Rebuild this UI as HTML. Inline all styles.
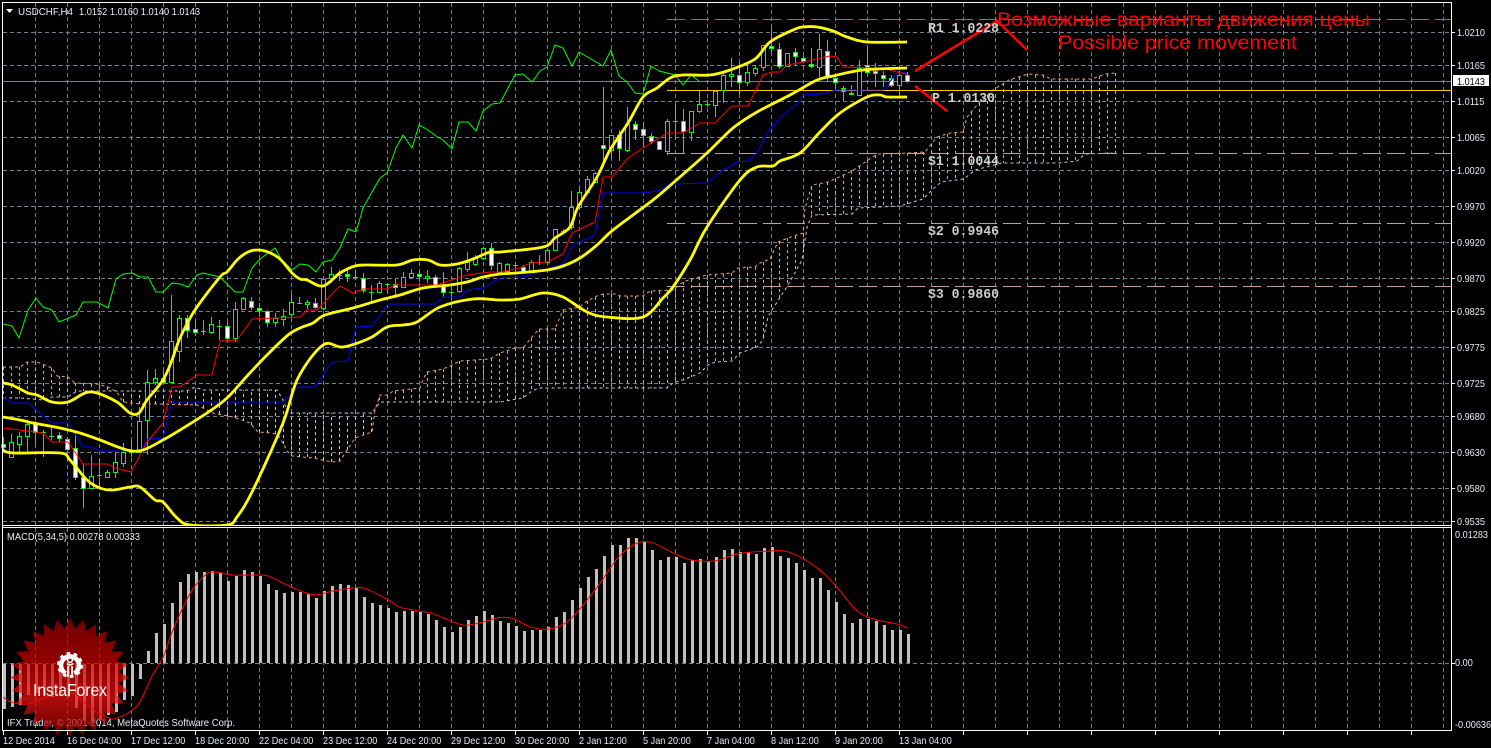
<!DOCTYPE html>
<html><head><meta charset="utf-8"><title>USDCHF,H4</title>
<style>
html,body{margin:0;padding:0;background:#000;width:1491px;height:748px;overflow:hidden}
svg{display:block;position:absolute;left:0;top:0}
.ax{font-family:"Liberation Sans",sans-serif;font-size:10.5px;fill:#e6eef6}
.lv{font-family:"Liberation Mono",monospace;font-size:13.5px;font-weight:bold;fill:#cfcfcf}
.rt{font-family:"Liberation Sans",sans-serif;font-size:19px;fill:#f00}
</style></head><body>
<svg id="c" width="1491" height="748" viewBox="0 0 1491 748" xmlns="http://www.w3.org/2000/svg">
<defs><clipPath id="mc"><rect x="3" y="3" width="1448" height="522"/></clipPath></defs>
<rect width="1491" height="748" fill="#000"/>
<g id="grid"></g>
<g id="cloud"></g>
<g id="hl" shape-rendering="crispEdges">
<line x1="3" x2="1451" y1="81.5" y2="81.5" stroke="#708090"/>
<line x1="667" x2="1451" y1="19.5" y2="19.5" stroke="#e0521c" stroke-dasharray="18 6"/>
<line x1="667" x2="1451" y1="153.5" y2="153.5" stroke="#c8a08c" stroke-dasharray="18 6"/>
<line x1="667" x2="1451" y1="223.5" y2="223.5" stroke="#c8a08c" stroke-dasharray="18 6"/>
<line x1="667" x2="1451" y1="286.5" y2="286.5" stroke="#c8a08c" stroke-dasharray="18 6"/>
<line x1="667" x2="1451" y1="90.5" y2="90.5" stroke="#ffc800"/>
</g>
<g id="candles" shape-rendering="crispEdges"></g>
<g id="lines" fill="none" clip-path="url(#mc)"></g>
<g id="macd"></g>
<text class="ax" x="7" y="726" textLength="228" lengthAdjust="spacingAndGlyphs">IFX Trader, © 2001-2014, MetaQuotes Software Corp.</text>
<g id="logo"></g>
<g id="frame" shape-rendering="crispEdges" fill="#fff">
<rect x="2" y="2" width="1450" height="1"/>
<rect x="2" y="2" width="1" height="729"/>
<rect x="1451" y="2" width="1" height="729"/>
<rect x="2" y="525" width="1450" height="1"/>
<rect x="2" y="527" width="1450" height="1"/>
<rect x="2" y="730" width="1450" height="1"/>
</g>
<polyline points="915,71 997,21 1027,50" fill="none" stroke="#f00" stroke-width="2.5"/>
<line x1="915" y1="86" x2="947" y2="111" stroke="#f00" stroke-width="2.5"/>
<polygon points="6,9 13,9 9.5,13" fill="#fff"/>
<text class="ax" x="18" y="15" textLength="55" lengthAdjust="spacingAndGlyphs">USDCHF,H4</text>
<text class="ax" x="79" y="15" textLength="121" lengthAdjust="spacingAndGlyphs">1.0152 1.0160 1.0140 1.0143</text>
<text class="ax" x="7" y="540" textLength="133" lengthAdjust="spacingAndGlyphs">MACD(5,34,5) 0.00278 0.00333</text>
<text class="lv" x="928" y="32" textLength="71" lengthAdjust="spacingAndGlyphs">R1 1.0228</text>
<text class="lv" x="932" y="102" textLength="63" lengthAdjust="spacingAndGlyphs">P 1.0130</text>
<text class="lv" x="928" y="165" textLength="71" lengthAdjust="spacingAndGlyphs">S1 1.0044</text>
<text class="lv" x="928" y="235" textLength="71" lengthAdjust="spacingAndGlyphs">S2 0.9946</text>
<text class="lv" x="928" y="298" textLength="71" lengthAdjust="spacingAndGlyphs">S3 0.9860</text>
<text class="rt" x="997" y="26" textLength="373" lengthAdjust="spacingAndGlyphs">Возможные варианты движения цены</text>
<text class="rt" x="1058" y="49" textLength="239" lengthAdjust="spacingAndGlyphs">Possible price movement</text>
<text class="ax fit" x="1457" y="36">1.0210</text>
<text class="ax fit" x="1457" y="69">1.0165</text>
<text class="ax fit" x="1457" y="105">1.0115</text>
<text class="ax fit" x="1457" y="141">1.0065</text>
<text class="ax fit" x="1457" y="174">1.0020</text>
<text class="ax fit" x="1457" y="210">0.9970</text>
<text class="ax fit" x="1457" y="246">0.9920</text>
<text class="ax fit" x="1457" y="282">0.9870</text>
<text class="ax fit" x="1457" y="315">0.9825</text>
<text class="ax fit" x="1457" y="351">0.9775</text>
<text class="ax fit" x="1457" y="387">0.9725</text>
<text class="ax fit" x="1457" y="420">0.9680</text>
<text class="ax fit" x="1457" y="456">0.9630</text>
<text class="ax fit" x="1457" y="492">0.9580</text>
<text class="ax fit" x="1457" y="525">0.9535</text>
<rect x="1453" y="75" width="36" height="11" fill="#fff"/>
<text class="ax fit" x="1457" y="85" style="fill:#000">1.0143</text>
<text class="ax fit" x="1455" y="538">0.01283</text>
<text class="ax fit" x="1455" y="666">0.00</text>
<text class="ax fit" x="1455" y="728">-0.00636</text>
<text class="ax fit" x="3" y="744">12 Dec 2014</text>
<text class="ax fit" x="67" y="744">16 Dec 04:00</text>
<text class="ax fit" x="131" y="744">17 Dec 12:00</text>
<text class="ax fit" x="195" y="744">18 Dec 20:00</text>
<text class="ax fit" x="259" y="744">22 Dec 04:00</text>
<text class="ax fit" x="323" y="744">23 Dec 12:00</text>
<text class="ax fit" x="387" y="744">24 Dec 20:00</text>
<text class="ax fit" x="451" y="744">29 Dec 12:00</text>
<text class="ax fit" x="515" y="744">30 Dec 20:00</text>
<text class="ax fit" x="579" y="744">2 Jan 12:00</text>
<text class="ax fit" x="643" y="744">5 Jan 20:00</text>
<text class="ax fit" x="707" y="744">7 Jan 04:00</text>
<text class="ax fit" x="771" y="744">8 Jan 12:00</text>
<text class="ax fit" x="835" y="744">9 Jan 20:00</text>
<text class="ax fit" x="899" y="744">13 Jan 04:00</text>
<text x="33" y="696" textLength="74" lengthAdjust="spacingAndGlyphs" font-family="Liberation Sans, sans-serif" font-size="17.5" fill="#fff">InstaForex</text>
<g transform="translate(70 665)" fill="none" stroke="#fff">
<circle r="11.5" stroke-width="3" stroke-dasharray="3.6 3.6"/>
<path d="M-4.2 8.4A9 9 0 1 1 4.2 8.4" stroke-width="4.6"/>
<circle cy="-5" r="2.4" stroke-width="1.6"/>
<path d="M-3.2 -1.5Q0 1.2 3.2 -1.5" stroke-width="1.6"/>
<path d="M-2 1V12M2 1V12" stroke-width="1.8"/>
</g>
</svg>
<script>
var $=function(id){return document.getElementById(id)};
var s,i,j;
/* grid */
s='<g shape-rendering="crispEdges" stroke="#708090" stroke-dasharray="4 3">';
[32,65,101,137,170,206,242,278,311,347,383,416,452,488,521,663].forEach(function(y){s+='<line x1="3" x2="1451" y1="'+(y+.5)+'" y2="'+(y+.5)+'"/>'});
for(i=35;i<=1443;i+=32){s+='<line x1="'+(i+.5)+'" x2="'+(i+.5)+'" y1="3" y2="525"/><line x1="'+(i+.5)+'" x2="'+(i+.5)+'" y1="528" y2="730"/>'}
s+='</g><g shape-rendering="crispEdges" stroke="#fff">';
[32,65,101,137,170,206,242,278,311,347,383,416,452,488,521,663].forEach(function(y){s+='<line x1="1452" x2="1455" y1="'+(y+.5)+'" y2="'+(y+.5)+'"/>'});
for(i=3;i<=1451;i+=64){s+='<line x1="'+(i+.5)+'" x2="'+(i+.5)+'" y1="731" y2="735"/>'}
s+='</g>';
$('grid').innerHTML=s;
/* cloud */
var A=[[3,367],[20,367],[27,362],[37,362],[52,368],[57,376],[68,377],[75,383],[97,384],[108,387],[117,392],[123,402],[140,404],[160,404],[197,405],[213,413],[233,417],[250,423],[258,432],[272,433],[278,435],[288,452],[292,456],[313,458],[332,462],[340,461],[355,438],[372,432],[375,410],[380,395],[388,395],[393,391],[420,388],[421,384],[427,372],[443,369],[450,366],[460,361],[490,359],[500,353],[515,348],[523,348],[532,337],[539,329],[555,329],[563,310],[580,307],[587,301],[597,296],[603,294],[617,294],[620,296],[643,296],[650,291],[673,290],[683,282],[692,279],[707,275],[732,273],[738,268],[755,267],[760,263],[770,259],[778,242],[788,238],[803,233],[805,208],[812,185],[828,182],[852,171],[877,154],[908,153],[925,152],[937,137],[950,133],[963,132],[967,117],[977,105],[993,90],[1009,80],[1028,74],[1043,75],[1051,79],[1092,79],[1105,74],[1116,73]];
var B=[[3,398],[20,398],[43,400],[52,397],[68,397],[77,391],[187,391],[195,387],[203,390],[277,390],[283,400],[288,413],[372,413],[380,402],[500,402],[523,398],[532,391],[539,388],[667,388],[673,383],[683,380],[700,373],[708,365],[715,362],[732,361],[740,353],[757,347],[763,340],[768,317],[772,310],[788,285],[802,260],[807,227],[812,215],[852,214],[858,208],[900,206],[923,199],[932,190],[941,182],[964,179],[975,170],[1002,163],[1058,163],[1077,161],[1085,154],[1116,153]];
function at(L,x){for(var k=1;k<L.length;k++){if(x<=L[k][0]){var a=L[k-1],b=L[k];return a[1]+(b[1]-a[1])*(x-a[0])/(b[0]-a[0])}}return L[L.length-1][1]}
function pts(L){return L.map(function(p){return p[0]+','+p[1]}).join(' ')}
function smooth(L){var d='M'+L[0][0]+' '+L[0][1];for(var k=0;k<L.length-1;k++){var p0=L[k?k-1:0],p1=L[k],p2=L[k+1],p3=L[Math.min(k+2,L.length-1)];
 d+='C'+(p1[0]+(p2[0]-p0[0])/6).toFixed(1)+' '+(p1[1]+(p2[1]-p0[1])/6).toFixed(1)+' '+(p2[0]-(p3[0]-p1[0])/6).toFixed(1)+' '+(p2[1]-(p3[1]-p1[1])/6).toFixed(1)+' '+p2[0]+' '+p2[1]}return d}
s='';
for(i=0;i<140;i++){var x=3.5+8*i,ya=at(A,x),yb=at(B,x);
 s+='<line shape-rendering="crispEdges" x1="'+x+'" x2="'+x+'" y1="'+ya.toFixed(0)+'" y2="'+yb.toFixed(0)+'" stroke="'+(ya<yb?'#f4a460':'#d8bfd8')+'"/>'}
s='<g stroke-dasharray="3 3">'+s+'</g>';
s+='<polyline points="'+pts(A)+'" fill="none" stroke="#f4a460" stroke-dasharray="3 3"/>';
s+='<polyline points="'+pts(B)+'" fill="none" stroke="#d8bfd8" stroke-dasharray="3 3"/>';
$('cloud').innerHTML=s;
/* candles: top,bottom,high,low,bear */
var C=[[444,447,437,451,1],[442,457,434,457],[436,444,432,452],[424,436,420,453],[423,432,421,445,1],[432,432,430,457],[436,436,428,440],[435,438,432,442,1],[439,449,437,451,1],[448,477,432,480,1],[477,488,464,508,1],[476,488,455,488],[475,475,458,487],[472,477,470,478],[462,472,453,478],[452,463,443,467],[452,452,440,457],[421,452,407,453],[382,420,370,455],[378,382,369,385],[378,382,370,383,1],[341,382,295,382],[318,351,315,362],[318,330,315,338,1],[329,332,320,336,1],[331,331,320,335],[324,332,317,334],[326,326,320,340],[326,338,322,340,1],[309,338,302,342],[298,309,297,310],[301,307,297,310,1],[308,310,303,317,1],[311,322,310,327,1],[318,322,313,327],[316,319,309,326],[302,314,294,317],[303,303,297,304],[302,304,300,309],[303,307,298,309,1],[279,308,277,310],[274,278,267,283],[275,275,270,281],[274,276,268,282,1],[277,277,271,279],[278,290,273,293,1],[292,292,285,302],[283,292,281,293],[284,284,283,293],[284,287,278,298,1],[277,287,272,288],[273,277,269,277],[274,276,270,282,1],[276,278,270,283],[277,285,275,287,1],[285,292,272,297,1],[292,292,283,300],[268,291,267,293],[262,269,252,272],[257,264,255,266],[248,258,247,260],[248,265,243,270,1],[263,272,262,273],[264,271,263,272],[265,265,262,272],[267,271,265,272,1],[262,272,260,273],[262,262,255,265],[250,262,250,264],[229,250,229,251],[231,231,229,233],[207,227,191,230],[192,207,188,210],[179,192,176,193],[173,182,172,183],[145,148,87,167,1],[135,150,135,159],[135,148,130,161,1],[124,150,107,152],[124,129,121,140,1],[129,135,122,147,1],[136,141,133,144,1],[141,149,141,149,1],[121,151,119,155],[121,121,105,140],[121,131,109,153,1],[111,132,111,141],[104,111,91,113],[104,104,100,107],[91,105,90,117],[75,90,72,103],[74,76,58,87],[75,82,63,94,1],[72,82,63,86],[68,73,65,76],[45,67,45,71],[46,48,27,52,1],[49,66,43,69,1],[53,66,53,67],[52,56,48,66,1],[58,61,56,63,1],[64,66,48,68,1],[49,67,34,77],[51,76,40,82,1],[78,82,75,88,1],[88,91,86,101,1],[93,94,85,95,1],[68,95,60,96],[65,72,48,73,1],[71,73,63,87,1],[75,78,71,87,1],[78,85,75,87,1],[75,85,71,95],[75,81,72,83,1]];
s='';
C.forEach(function(c,n){var x=3.5+8*n;
 s+='<line x1="'+x+'" x2="'+x+'" y1="'+c[2]+'" y2="'+c[3]+'" stroke="#0f0"/>';
 if(c[0]==c[1])s+='<line x1="'+(x-2.5)+'" x2="'+(x+2.5)+'" y1="'+(c[0]+.5)+'" y2="'+(c[0]+.5)+'" stroke="#0f0"/>';
 else s+='<rect x="'+(x-2)+'" y="'+(c[0]+.5)+'" width="4" height="'+(c[1]-c[0])+'" fill="'+(c[4]?'#fff':'#000')+'" stroke="#0f0"/>';
});
$('candles').innerHTML=s;
/* indicator lines */
var green=[[3,324],[12,326],[19,338],[28,310],[36,298],[43,307],[52,310],[59,322],[76,315],[83,302],[97,302],[108,308],[116,279],[123,274],[132,273],[140,277],[148,277],[156,292],[163,292],[172,283],[180,284],[188,287],[197,275],[203,273],[220,277],[235,292],[243,292],[252,268],[260,259],[275,248],[281,259],[292,270],[300,264],[308,265],[316,272],[323,262],[332,260],[340,248],[348,229],[356,232],[363,208],[372,192],[380,178],[387,173],[396,148],[403,135],[412,148],[419,125],[428,130],[436,136],[443,140],[452,149],[459,122],[468,122],[476,131],[483,111],[492,104],[500,103],[515,75],[523,74],[532,82],[540,71],[547,67],[555,45],[563,48],[572,66],[579,52],[603,66],[611,50],[619,76],[627,82],[635,93],[643,94],[651,66],[659,71],[675,75],[683,85],[691,75],[699,81]];
var red=[[3,428],[43,433],[52,442],[68,442],[83,464],[108,464],[115,468],[131,472],[147,442],[163,423],[172,387],[180,387],[197,375],[212,375],[220,341],[237,340],[252,319],[300,317],[307,310],[317,310],[333,293],[340,286],[353,293],[363,289],[387,289],[395,285],[437,285],[467,275],[490,272],[500,272],[520,268],[530,263],[547,262],[563,254],[572,233],[595,222],[603,177],[612,177],[628,158],[643,148],[667,133],[683,133],[700,123],[715,123],[732,106],[748,106],[763,75],[772,72],[780,72],[787,65],[803,62],[830,56],[837,57],[843,67],[883,68],[897,72],[907,74]];
var blue=[[3,397],[12,403],[28,403],[52,423],[68,423],[83,447],[92,447],[100,451],[140,451],[148,439],[163,438],[172,402],[283,402],[297,387],[315,387],[332,362],[348,361],[356,327],[372,326],[388,304],[435,304],[443,297],[460,297],[467,290],[483,288],[500,278],[523,277],[563,264],[573,245],[595,235],[603,193],[645,193],[660,190],[670,184],[707,183],[723,170],[738,162],[748,161],[757,153],[767,133],[783,115],[797,104],[803,95],[820,94],[837,90],[883,90],[897,73],[907,73]];
var yu=[[3,383],[12,385],[28,393],[37,395],[52,402],[68,402],[85,393],[97,393],[117,402],[130,413],[139,413],[147,400],[163,380],[172,360],[180,338],[195,310],[220,277],[227,272],[238,259],[248,252],[257,250],[268,252],[280,259],[292,273],[300,279],[307,280],[323,286],[340,273],[355,266],[367,265],[397,265],[413,260],[428,260],[440,265],[457,264],[473,259],[490,252],[500,252],[543,247],[555,238],[570,227],[578,207],[597,177],[610,150],[628,123],[643,97],[657,88],[670,78],[683,75],[710,75],[730,70],[755,59],[770,42],[793,30],[803,27],[817,27],[833,31],[847,37],[867,42],[907,42]];
var ym=[[3,417],[20,420],[33,423],[60,428],[80,433],[100,440],[127,450],[143,450],[163,440],[180,430],[207,413],[227,398],[248,375],[267,355],[288,335],[300,328],[313,323],[325,315],[353,308],[380,300],[400,295],[423,288],[450,285],[467,282],[483,277],[500,274],[517,273],[547,270],[563,266],[580,258],[597,245],[613,230],[653,200],[673,183],[707,153],[733,128],[757,112],[790,95],[817,80],[833,76],[863,70],[907,68]];
var yl=[[3,450],[13,453],[60,453],[70,460],[87,480],[100,488],[113,490],[130,487],[140,487],[155,500],[163,502],[177,518],[190,525],[227,525],[237,517],[253,490],[283,423],[298,378],[323,345],[343,347],[370,338],[387,327],[403,325],[417,322],[440,307],[473,299],[500,300],[520,299],[543,293],[563,297],[587,312],[607,317],[643,317],[663,298],[673,287],[690,260],[707,227],[740,180],[757,167],[773,166],[780,161],[800,153],[820,132],[840,113],[867,97],[880,95],[887,97],[907,97]];
s='';
[[green,'#0f0',1],[blue,'#00f',1],[red,'#f00',1]].forEach(function(l){s+='<polyline points="'+pts(l[0])+'" stroke="'+l[1]+'" stroke-width="'+l[2]+'" stroke-linejoin="round"/>'});
[yu,ym,yl].forEach(function(l){s+='<path d="'+smooth(l)+'" stroke="#ff0" stroke-width="2.8" stroke-linejoin="round"/>'});
$('lines').innerHTML=s;
/* MACD */
var neg=[709,707,705,695,693,695,697,695,697,708,720,723,720,715,712,700,696,679];
var pos=[651,633,624,603,582,574,572,572,571,573,581,576,570,572,576,584,590,593,592,592,594,598,591,586,584,585,588,597,603,605,608,612];
var zv=[272,272,275,282,300,321,336,321,300,288,273,285,303,309,318,333,330,330,320,291,276,240,204,171,147,108,75,75,54,54,66,90,120,111,111,129,120,117,123,111,90,87,96,96,102,84,81,108,114,129,150,174,174,210,246,282,309,297,297,303,315,330,330,342];
s='<g fill="#c0c0c0" shape-rendering="crispEdges">';
neg.forEach(function(y,n){s+='<rect x="'+(3+8*n)+'" y="664" width="3" height="'+(y-664)+'"/>'});
pos.forEach(function(y,n){s+='<rect x="'+(3+8*(n+18))+'" y="'+y+'" width="3" height="'+(663-y)+'"/>'});
zv.forEach(function(v,n){var y=Math.round(520+v/3);s+='<rect x="'+(403+8*n)+'" y="'+y+'" width="3" height="'+(663-y)+'"/>'});
s+='</g>';
var z5=[[8,530],[30,545],[75,553],[110,543],[160,525],[220,520],[250,545],[290,575],[330,595],[350,595],[390,575],[420,545],[455,470],[490,410],[515,340],[545,270],[580,205],[620,162],[650,157],[700,165],[780,165],[810,170],[850,190],[900,212],[945,225],[1000,213],[1065,203],[1100,208],[1165,240],[1200,262]].map(function(p){return [p[0]/3,520+p[1]/3]});
var z6=[[50,272],[90,280],[150,305],[190,316],[250,302],[280,293],[320,295],[370,320],[420,328],[470,310],[510,270],[570,190],[620,115],[670,72],[715,67],[780,100],[830,120],[900,122],[960,102],[1040,94],[1110,97],[1190,145],[1240,195],[1300,270],[1350,297],[1420,313],[1447,325]].map(function(p){return [400+p[0]/2.85,520+p[1]/3]});
s+='<path d="'+smooth(z5.concat(z6).map(function(p){return [+p[0].toFixed(1),+p[1].toFixed(1)]}))+'" fill="none" stroke="#f00"/>';
$('macd').innerHTML=s;
/* logo */
var cx=70,cy=677.5,n=28,d='';
for(i=0;i<n*2;i++){var r=i%2?49:59.5,a=-Math.PI/2+i*Math.PI/n;d+=(i?'L':'M')+(cx+r*Math.cos(a)).toFixed(1)+' '+(cy+r*Math.sin(a)).toFixed(1)}
$('logo').innerHTML='<defs><linearGradient id="lg" x1="0" y1="0" x2="0" y2="1"><stop offset="0" stop-color="#9c0000"/><stop offset=".4" stop-color="#d00000"/><stop offset=".68" stop-color="#f01010"/><stop offset="1" stop-color="#900000"/></linearGradient></defs><path d="'+d+'Z" fill="url(#lg)" opacity=".72"/>';
/* fit axis label widths to the narrower terminal font */
[].forEach.call(document.querySelectorAll('text.fit'),function(t){t.setAttribute('textLength',(t.getComputedTextLength()*.87).toFixed(1));t.setAttribute('lengthAdjust','spacingAndGlyphs')});
</script>
</body></html>
